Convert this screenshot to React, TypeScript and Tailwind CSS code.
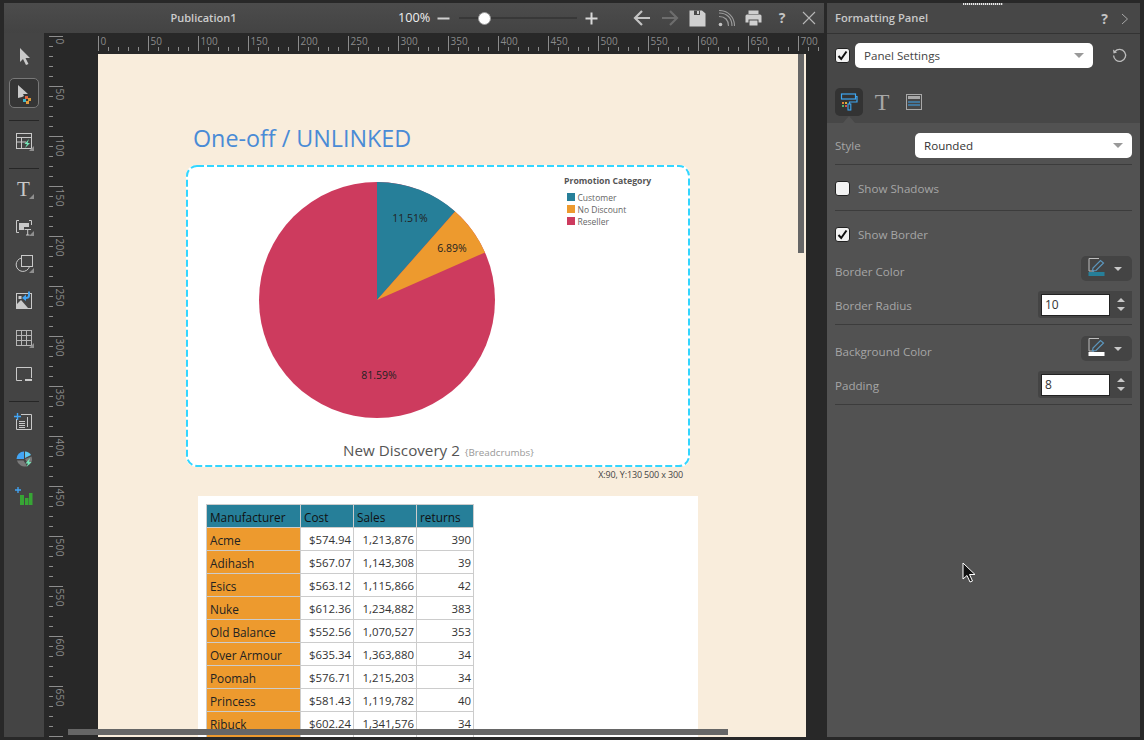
import React from "react";

const FONT = '"Open Sans", "Noto Sans", sans-serif';

function Triangle() {
  return <polygon points="25,25 25,20 20,25" fill="#8f8f8f" />;
}

function Tool({ children }: { children: React.ReactNode }) {
  return (
    <svg width="30" height="30" viewBox="0 0 30 30" fill="none" className="shrink-0">
      {children}
    </svg>
  );
}

function ToolDivider() {
  return <div className="h-px w-[30px] shrink-0 bg-[#262626]" />;
}

function Toolbar() {
  return (
    <div className="flex w-[40px] shrink-0 flex-col items-center bg-[#444444] pt-[6px]">
      <Tool>
        <polygon points="11,9 21,19 16.5,19 19.5,25 17,26 14,20 11,23" fill="#c9c9c9" />
      </Tool>
      <div className="mt-[9px] flex h-[30px] w-[30px] shrink-0 items-center justify-center rounded-[5px] border border-[#787878] bg-[#353535]">
        <svg width="28" height="28" viewBox="0 0 28 28" className="shrink-0">
          <polygon points="8,6 18,15 13,15 14,17 12,18 8,19" fill="#c9c9c9" />
          <rect x="15" y="17" width="3" height="3" fill="#e2673f" />
          <rect x="18" y="19" width="3" height="3" fill="#d79a3a" />
          <rect x="13" y="20" width="3" height="3" fill="#3fb6c9" />
          <rect x="16" y="22" width="3" height="3" fill="#e49b3d" />
        </svg>
      </div>
      <div className="mt-[12px]"><ToolDivider /></div>
      <div className="mt-[5px]">
        <Tool>
          <rect x="7.5" y="7.5" width="15" height="15" stroke="#c9c9c9" />
          <path d="M7.5 11.5H22.5M12.5 11.5V22.5M7.5 16H17" stroke="#c9c9c9" />
          <polygon points="20,13 15.5,18 18,18 16,22 21,17 18.5,17" fill="#74e8b8" />
          <Triangle />
        </Tool>
      </div>
      <div className="mt-[12px]"><ToolDivider /></div>
      <div className="mt-[5px]">
        <Tool>
          <text x="8" y="22" fill="#c9c9c9" fontSize="21" fontFamily='"Liberation Serif", serif'>T</text>
          <Triangle />
        </Tool>
      </div>
      <div className="mt-[7px]">
        <Tool>
          <path d="M10 9.5H7.5V21.5H10M20 9.5H22.5V14" stroke="#c9c9c9" />
          <rect x="10" y="12" width="10" height="4" fill="#c9c9c9" />
          <rect x="10" y="12" width="5" height="7" fill="#c9c9c9" />
          <path d="M15.5 18.5H22M18.7 18.5V24M17 24H20.5" stroke="#c9c9c9" />
          <Triangle />
        </Tool>
      </div>
      <div className="mt-[7px]">
        <Tool>
          <rect x="12.5" y="7.5" width="11" height="11" stroke="#c9c9c9" />
          <path d="M12.5 10A6.8 6.8 0 1 0 20.5 18.5" stroke="#c9c9c9" />
          <Triangle />
        </Tool>
      </div>
      <div className="mt-[7px]">
        <Tool>
          <rect x="7.5" y="8.5" width="15" height="15" stroke="#c9c9c9" />
          <polygon points="8,23 8,19 12,15 19,23" fill="#c9c9c9" />
          <rect x="9.5" y="11" width="3" height="3" fill="#c9c9c9" />
          <path d="M20 6.5V10.5C20 12 18.5 13 16.5 13" stroke="#42a5f5" strokeWidth="2" />
          <polygon points="13,13 17,9.5 17,16" fill="#42a5f5" />
        </Tool>
      </div>
      <div className="mt-[8px]">
        <Tool>
          <rect x="7.5" y="7.5" width="15" height="15" stroke="#b5b5b5" />
          <path d="M7.5 12.5H22.5M7.5 17.5H22.5M12.5 7.5V22.5M17.5 7.5V22.5" stroke="#b5b5b5" />
          <Triangle />
        </Tool>
      </div>
      <div className="mt-[6px]">
        <Tool>
          <path d="M13 21.5H7.5V8.5H22.5V19" stroke="#c9c9c9" />
          <rect x="16" y="20" width="7" height="2" fill="#c9c9c9" />
        </Tool>
      </div>
      <div className="mt-[12px]"><ToolDivider /></div>
      <div className="mt-[5px]">
        <Tool>
          <path d="M12 7.5H22.5V22.5H7.5V12" stroke="#c9c9c9" />
          <path d="M10 14.5H16M10 16.5H16M10 18.5H16M10 20.5H16M18.5 10V20" stroke="#c9c9c9" />
          <path d="M8.5 6V13M5 9.5H12" stroke="#42a5f5" strokeWidth="1.4" />
        </Tool>
      </div>
      <div className="mt-[7px]">
        <Tool>
          <path d="M15 7.5 A7.5 7.5 0 0 0 7.5 15 H15Z" fill="#42a5f5" />
          <path d="M16 7.5 A7.5 7.5 0 0 1 22 11 L16 14Z" fill="#5ec8f2" />
          <path d="M8 16.5 H14.5 L18 22 A7.5 7.5 0 0 1 8 16.5Z" fill="#7a7a7a" />
          <path d="M16 15 L22.5 12.5 A7.5 7.5 0 0 1 20 21 Z" fill="#7a7a7a" />
          <polygon points="21,14 16.5,19.5 19,19.5 17.5,23 22.5,18 20,18" fill="#74e8b8" />
        </Tool>
      </div>
      <div className="mt-[7px]">
        <Tool>
          <rect x="11" y="14" width="4" height="10" fill="#37a535" />
          <rect x="16" y="17" width="3.5" height="7" fill="#37a535" />
          <rect x="20" y="12" width="3.5" height="12" fill="#37a535" />
          <path d="M9 6V12M6 9H12" stroke="#42a5f5" strokeWidth="1.3" />
        </Tool>
      </div>
    </div>
  );
}

function VerticalRuler() {
  const ticks: number[] = [];
  for (let i = 0; i <= 700; i += 10) ticks.push(i);
  return (
    <svg width="54" height="704" viewBox="0 0 54 704" className="shrink-0">
      {ticks.map((t) => {
        const y = t + 3.5;
        const major = t % 50 === 0;
        return (
          <g key={t}>
            <line x1="5" x2={major ? 19 : 9} y1={y} y2={y} stroke="#8d8d8d" />
            {major && t < 700 && (
              <text
                transform={`translate(12 ${y + 2}) rotate(90)`}
                fontSize="10"
                fill="#8a8a8a"
                fontFamily={FONT}
                letterSpacing="0.4"
              >
                {t}
              </text>
            )}
          </g>
        );
      })}
    </svg>
  );
}

function HorizontalRuler() {
  const ticks: number[] = [];
  for (let i = 0; i <= 720; i += 10) ticks.push(i);
  return (
    <svg width="726" height="21" viewBox="0 0 726 21" className="shrink-0">
      {ticks.map((t) => {
        const x = t + 0.5;
        const major = t % 50 === 0;
        return (
          <g key={t}>
            <line x1={x} x2={x} y1={major ? 3 : 14} y2="18" stroke="#8d8d8d" />
            {major && (
              <text x={x + 2} y="12" fontSize="10" fill="#8a8a8a" fontFamily={FONT}>
                {t}
              </text>
            )}
          </g>
        );
      })}
    </svg>
  );
}

function PieChart() {
  return (
    <svg width="499" height="262" viewBox="0 0 499 262" className="shrink-0" fontFamily={FONT}>
      <circle cx="188" cy="133" r="118" fill="#cd3b5e" />
      <path d="M188 133 L188 15 A118 118 0 0 1 266.1 44.5 Z" fill="#267f99" />
      <path d="M188 133 L266.1 44.5 A118 118 0 0 1 296 85.4 Z" fill="#ed9a2e" />
      <text x="221" y="55" textAnchor="middle" fontSize="10.5" fill="#222">11.51%</text>
      <text x="263" y="85" textAnchor="middle" fontSize="10.5" fill="#222">6.89%</text>
      <text x="190" y="212" textAnchor="middle" fontSize="10.5" fill="#222">81.59%</text>
      <text x="375" y="17" fontSize="8.7" fontWeight="700" fill="#555">Promotion Category</text>
      <rect x="378" y="26" width="8" height="8" fill="#267f99" />
      <rect x="378" y="38" width="8" height="8" fill="#ed9a2e" />
      <rect x="378" y="50" width="8" height="8" fill="#cd3b5e" />
      <text x="388.5" y="34" fontSize="8.5" fill="#666">Customer</text>
      <text x="388.5" y="46" fontSize="8.5" fill="#666">No Discount</text>
      <text x="388.5" y="58" fontSize="8.5" fill="#666">Reseller</text>
    </svg>
  );
}

const rows: [string, string, string, string][] = [
  ["Acme", "$574.94", "1,213,876", "390"],
  ["Adihash", "$567.07", "1,143,308", "39"],
  ["Esics", "$563.12", "1,115,866", "42"],
  ["Nuke", "$612.36", "1,234,882", "383"],
  ["Old Balance", "$552.56", "1,070,527", "353"],
  ["Over Armour", "$635.34", "1,363,880", "34"],
  ["Poomah", "$576.71", "1,215,203", "34"],
  ["Princess", "$581.43", "1,119,782", "40"],
  ["Ribuck", "$602.24", "1,341,576", "34"],
  ["\u00a0", "\u00a0", "\u00a0", "\u00a0"],
];

function DataTable() {
  return (
    <table className="w-[267px] table-fixed border-collapse text-[11.4px] leading-[20px] text-[#333]">
      <colgroup>
        <col className="w-[94px]" />
        <col className="w-[53px]" />
        <col className="w-[63px]" />
        <col className="w-[57px]" />
      </colgroup>
      <thead>
        <tr className="h-[23px] bg-[#267f99] text-[#111]">
          {["Manufacturer", "Cost", "Sales", "returns"].map((h) => (
            <th key={h} className="border border-[#cccccc] px-[3px] pb-0 pt-[2px] text-left text-[11.8px] font-normal">{h}</th>
          ))}
        </tr>
      </thead>
      <tbody>
        {rows.map((r, i) => (
          <tr key={i} className="h-[23px]">
            <td className="border border-[#cccccc] bg-[#ed9a2e] px-[3px] pb-0 pt-[2px] text-[11.8px] text-[#222]">{r[0]}</td>
            <td className="border border-[#cccccc] pb-0 pl-[3px] pr-[2px] pt-[2px] text-right">{r[1]}</td>
            <td className="border border-[#cccccc] pb-0 pl-[3px] pr-[2px] pt-[2px] text-right">{r[2]}</td>
            <td className="border border-[#cccccc] pb-0 pl-[3px] pr-[2px] pt-[2px] text-right">{r[3]}</td>
          </tr>
        ))}
      </tbody>
    </table>
  );
}

function Page() {
  return (
    <div className="h-[683px] w-[708px] shrink-0 overflow-hidden bg-[#f9eddc]">
      <div className="ml-[95px] mt-[68px] h-[32px] text-[23.3px] leading-[32px] text-[#4a8bd6]">One-off / UNLINKED</div>
      <div className="relative ml-[88px] mt-[11px] flex h-[302px] w-[504px] flex-col rounded-[10px] bg-white pb-[2px] pl-[3px] pr-[2px] pt-[2px]">
        <PieChart />
        <div className="mt-[10px] flex h-[22px] items-baseline justify-center gap-[5px]">
          <span className="text-[15.2px] text-[#555]">New Discovery 2</span>
          <span className="text-[9.8px] text-[#999]">{"{Breadcrumbs}"}</span>
        </div>
        <svg width="504" height="302" viewBox="0 0 504 302" fill="none" className="absolute left-0 top-0">
          <rect x="1" y="1" width="502" height="300" rx="10" stroke="#33d6ff" strokeWidth="2" strokeDasharray="7 3" />
        </svg>
      </div>
      <div className="ml-[89px] mt-px h-[14px] w-[496px] text-right text-[9px] leading-[14px] tracking-[-0.15px] text-[#444]">X:90, Y:130 500 x 300</div>
      <div className="ml-[100px] mt-[14px] h-[300px] w-[500px] bg-white pl-[8px] pt-[8px]">
        <DataTable />
      </div>
    </div>
  );
}

function TitleBar() {
  return (
    <div className="flex h-[30px] shrink-0 items-center bg-gradient-to-b from-[#4c4c4c] to-[#434343]">
      <div className="flex w-[394px] justify-center pl-[5px] pt-px">
        <span className="text-[11px] font-semibold text-[#cccccc]">Publication1</span>
      </div>
      <span className="w-[36px] text-[12.7px] text-[#eeeeee]">100%</span>
      <svg width="13" height="13" viewBox="0 0 13 13" className="ml-[3px] shrink-0">
        <rect x="0.5" y="5.5" width="12" height="2" fill="#d0d0d0" />
      </svg>
      <div className="relative ml-[9px] flex h-[13px] w-[118px] shrink-0 items-center">
        <div className="h-[2px] w-full bg-[#383838]" />
        <div className="absolute left-[19px] top-0 h-[13px] w-[13px] rounded-full border border-[#9a9a9a] bg-white" />
      </div>
      <svg width="13" height="13" viewBox="0 0 13 13" className="ml-[8px] shrink-0">
        <path d="M0.5 6.5H12.5M6.5 0.5V12.5" stroke="#d8d8d8" strokeWidth="2" />
      </svg>
      <svg width="18" height="16" viewBox="0 0 18 16" fill="none" className="ml-[35px] shrink-0">
        <path d="M17 8H2M9 1 2 8 9 15" stroke="#c4c4c4" strokeWidth="2.2" />
      </svg>
      <svg width="18" height="16" viewBox="0 0 18 16" fill="none" className="ml-[10px] shrink-0">
        <path d="M1 8H16M9 1 16 8 9 15" stroke="#6d6d6d" strokeWidth="2.2" />
      </svg>
      <svg width="17" height="17" viewBox="0 0 17 17" className="ml-[10px] shrink-0">
        <path d="M0.5 0.5H13L16.5 3.5V16.5H0.5Z" fill="#cfcfcf" />
        <rect x="5" y="0.5" width="6" height="4.5" fill="#4a4a4a" />
        <rect x="8" y="1" width="2" height="3" fill="#cfcfcf" />
      </svg>
      <svg width="17" height="17" viewBox="0 0 17 17" fill="none" className="ml-[12px] shrink-0">
        <circle cx="2.5" cy="14.5" r="1.8" fill="#c4c4c4" />
        <path d="M1 6.5C7 6.5 10.5 10 10.5 16M1 3C9 3 14 8 14 16M1 0.5C10 0.5 16.5 7 16.5 16" stroke="#9c9c9c" strokeWidth="1.1" />
      </svg>
      <svg width="17" height="16" viewBox="0 0 17 16" className="ml-[10px] shrink-0">
        <path d="M3.5 0.5H13.5V4H3.5Z" fill="#cfcfcf" />
        <path d="M0.5 6Q0.5 4.5 2 4.5H15Q16.5 4.5 16.5 6V12.5H13.5V9.5H3.5V12.5H0.5Z" fill="#cfcfcf" />
        <rect x="4.5" y="10.5" width="8" height="5" fill="#cfcfcf" />
      </svg>
      <span className="ml-[15px] w-[10px] text-center text-[14px] font-bold leading-none text-[#c4c4c4]">?</span>
      <svg width="14" height="14" viewBox="0 0 14 14" fill="none" className="ml-[15px] shrink-0">
        <path d="M1 1 13 13M13 1 1 13" stroke="#b8b8b8" strokeWidth="1.1" />
      </svg>
    </div>
  );
}

function Caret() {
  return <div className="h-0 w-0 border-x-[5px] border-t-[5px] border-x-transparent border-t-[#999]" />;
}

function Check({ checked }: { checked: boolean }) {
  return (
    <div className="flex h-[15px] w-[15px] shrink-0 items-center justify-center rounded-[3px] border border-[#222] bg-[#f2f2f2]">
      {checked && (
        <svg width="11" height="11" viewBox="0 0 11 11" fill="none">
          <path d="M1.5 6 4.2 9 9.5 1.5" stroke="#111" strokeWidth="2" />
        </svg>
      )}
    </div>
  );
}

function Divider() {
  return <div className="mx-2 h-px bg-[#3c3c3c]" />;
}

function ColorButton({ color }: { color: string }) {
  return (
    <div className="flex h-[25px] w-[51px] items-center rounded-[5px] bg-[#444444] pl-[7px]">
      <svg width="17" height="22" viewBox="0 0 17 22" fill="none" className="shrink-0">
        <path d="M11 0.5H1V13H6" stroke="#bdbdbd" />
        <path d="M4.5 13 5 10 12.5 2.5 15.5 5 8 12.5Z" stroke="#5b96bd" strokeWidth="1.2" />
        <rect x="0.5" y="14" width="16" height="4" fill={color} />
      </svg>
      <div className="ml-[9px] h-0 w-0 border-x-[4px] border-t-[4px] border-x-transparent border-t-[#c8c8c8]" />
    </div>
  );
}

function Spinner({ value }: { value: string }) {
  return (
    <div className="flex h-[27px] w-[94px] items-center rounded-l-[3px] bg-[#444444] pl-[3px]">
      <div className="flex h-[22px] w-[69px] items-center border border-[#222] bg-white pl-[3px] text-[12px] text-[#333]">{value}</div>
      <div className="ml-[7px] flex flex-col items-center gap-[5px]">
        <div className="h-0 w-0 border-x-[4px] border-b-[4px] border-x-transparent border-b-[#c8c8c8]" />
        <div className="h-0 w-0 border-x-[4px] border-t-[4px] border-x-transparent border-t-[#c8c8c8]" />
      </div>
    </div>
  );
}

function FormattingPanel() {
  return (
    <div className="relative ml-[3px] flex w-[313px] shrink-0 flex-col">
      <div className="flex h-[31px] shrink-0 items-center border-b border-[#333] bg-[#474747] pl-2 pr-[11px] pt-px">
        <span className="text-[11.2px] font-semibold text-[#c8c8c8]">Formatting Panel</span>
        <span className="ml-auto text-[14px] font-bold leading-none text-[#c4c4c4]">?</span>
        <svg width="8" height="12" viewBox="0 0 8 12" fill="none" className="ml-[13px]">
          <path d="M1 1 6.5 6 1 11" stroke="#a8a8a8" />
        </svg>
      </div>
      <div className="h-[89px] shrink-0 bg-[#474747] px-2 pt-[9px]">
        <div className="flex h-[25px] items-center">
          <Check checked />
          <div className="ml-[5px] flex h-[25px] w-[238px] items-center justify-between rounded-[5px] bg-white pl-[9px] pr-[9px] text-[11.6px] text-[#444]">
            Panel Settings
            <Caret />
          </div>
          <svg width="15" height="15" viewBox="0 0 15 15" fill="none" className="ml-[19px]">
            <path d="M3 3.5A6 6 0 1 1 1.6 7.5" stroke="#bdbdbd" strokeWidth="1.3" />
            <path d="M1 1.5 1.5 5.5 5 4.5Z" fill="#bdbdbd" />
          </svg>
        </div>
        <div className="mt-[20px] flex items-center">
          <div className="relative flex h-[28px] w-[28px] items-center justify-center rounded-[5px] bg-[#333333]">
            <svg width="18" height="18" viewBox="0 0 18 18" fill="none">
              <rect x="1.5" y="1" width="14" height="5" stroke="#3ea6f0" strokeWidth="1.2" />
              <path d="M15.5 3.5H17V9H9.5V11" stroke="#3ea6f0" strokeWidth="1.2" />
              <rect x="8" y="11" width="2.8" height="6" stroke="#3ea6f0" strokeWidth="1.1" />
              <rect x="2" y="9" width="2" height="2" fill="#e4873a" />
              <rect x="5" y="9" width="2" height="2" fill="#d9b23a" />
              <rect x="2" y="12" width="2" height="2" fill="#55b56b" />
              <rect x="5" y="12" width="2" height="2" fill="#d6554c" />
            </svg>
            <div className="absolute -bottom-[7px] left-[8px] h-0 w-0 border-x-[6px] border-b-[7px] border-x-transparent border-b-[#525252]" />
          </div>
          <span className="ml-[10px] flex h-[28px] w-[18px] items-center justify-center text-[24px] leading-none text-[#a8a8a8] [font-family:'Liberation_Serif',serif]">T</span>
          <svg width="16" height="16" viewBox="0 0 16 16" fill="none" className="ml-[15px]">
            <rect x="0.5" y="0.5" width="15" height="15" stroke="#a8a8a8" />
            <rect x="2" y="2" width="12" height="3" fill="#a8a8a8" />
            <path d="M2 8H14M2 11H14" stroke="#3ea6f0" strokeWidth="1.2" />
          </svg>
        </div>
      </div>
      <div className="flex-1 bg-[#525252] text-[11.6px] text-[#a6a6a6]">
        <div className="mt-[10px] flex h-[25px] items-center justify-between px-2">
          <span>Style</span>
          <div className="flex h-[25px] w-[217px] items-center justify-between rounded-[5px] bg-white pl-[9px] pr-[9px] text-[#333]">
            Rounded
            <Caret />
          </div>
        </div>
        <div className="mt-[6px]"><Divider /></div>
        <div className="mt-[16px] flex h-[15px] items-center gap-2 px-2">
          <Check checked={false} />
          <span>Show Shadows</span>
        </div>
        <div className="mt-[14px]"><Divider /></div>
        <div className="mt-[16px] flex h-[15px] items-center gap-2 px-2">
          <Check checked />
          <span>Show Border</span>
        </div>
        <div className="mt-[14px] flex h-[25px] items-center justify-between px-2">
          <span className="pt-[6px]">Border Color</span>
          <ColorButton color="#267f99" />
        </div>
        <div className="mt-[10px] flex h-[27px] items-center justify-between px-2">
          <span className="pt-[2px]">Border Radius</span>
          <Spinner value="10" />
        </div>
        <div className="mt-[6px]"><Divider /></div>
        <div className="mt-[11px] flex h-[25px] items-center justify-between px-2">
          <span className="pt-[6px]">Background Color</span>
          <ColorButton color="#ffffff" />
        </div>
        <div className="mt-[10px] flex h-[27px] items-center justify-between px-2">
          <span className="pt-[2px]">Padding</span>
          <Spinner value="8" />
        </div>
        <div className="mt-[6px]"><Divider /></div>
      </div>
      <div className="absolute left-[136px] top-0 h-[2px] w-[40px] bg-[repeating-linear-gradient(90deg,#e8e8e8_0,#e8e8e8_1px,#777_1px,#777_2px)]" />
      <svg width="16" height="22" viewBox="0 0 16 22" className="absolute left-[135px] top-[559px]">
        <polygon points="1,1 1,17 5,13.5 8,20 10.5,19 7.5,12.5 13,12.5" fill="#111" stroke="#fff" />
      </svg>
    </div>
  );
}

export default function App() {
  return (
    <div
      className="relative flex h-[740px] w-[1144px] overflow-hidden bg-[#282828] py-[3px] pl-[4px]"
      style={{ fontFamily: FONT }}
    >
      <div className="flex w-[820px] shrink-0 flex-col">
        <TitleBar />
        <div className="flex min-h-0 flex-1">
          <Toolbar />
          <VerticalRuler />
          <div className="flex min-w-0 flex-1 flex-col">
            <HorizontalRuler />
            <Page />
          </div>
        </div>
      </div>
      <FormattingPanel />
      <div className="absolute left-[798px] top-[54px] h-[199px] w-[6px] bg-[#666666]" />
      <div className="absolute left-[68px] top-[729px] h-[6px] w-[660px] bg-[#666666]" />
    </div>
  );
}
